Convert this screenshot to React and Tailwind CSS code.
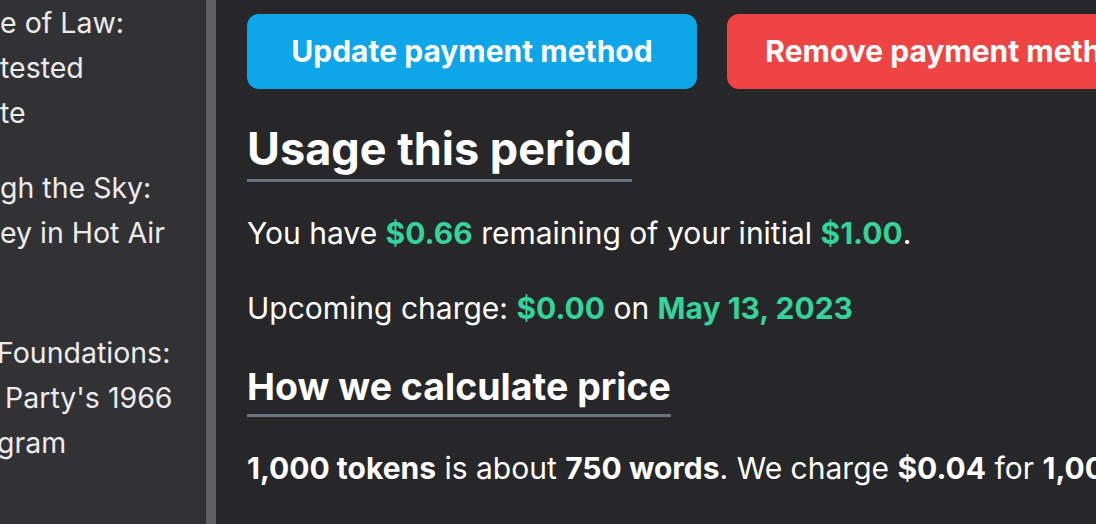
export default function App() {
  const groups = [
    ["e of Law:", "tested", "te"],
    ["gh the Sky:", "ey in Hot Air", ""],
    ["Foundations:", " Party's 1966", "gram"],
    ["", "", ""],
  ];
  return (
    <div
      className="flex h-[524px] w-[1096px] overflow-hidden bg-[#27272a]"
      style={{ fontFamily: "Inter, 'Noto Sans', sans-serif" }}
    >
      <aside className="w-[206px] shrink-0 overflow-hidden bg-[#323235] text-[28.5px] leading-[45px] text-[#ececee]">
        <div className="flex flex-col gap-[30px] whitespace-pre">
          {groups.map((g, i) => (
            <div key={i} className={i === 2 ? "-ml-[3px]" : ""}>
              {g.map((l, j) => (
                <div key={j} className="h-[45px]">{l}</div>
              ))}
            </div>
          ))}
        </div>
      </aside>
      <div className="w-[10px] shrink-0 bg-[#5f5f63]" />
      <main className="flex-1 overflow-hidden pl-[31px] pt-[14px] text-white">
        <div className="flex w-[930px] gap-[30px]">
          <button className="flex h-[75px] flex-1 items-center justify-center rounded-[12px] bg-[#0ea5e9] text-[30px] font-bold text-white">
            Update payment method
          </button>
          <button className="flex h-[75px] flex-1 items-center justify-center whitespace-nowrap rounded-[12px] bg-[#ef4444] text-[30px] font-bold text-white">
            Remove payment method
          </button>
        </div>
        <h2 className="mt-[33px] inline-block border-b-[3px] border-[#6b7280] pb-[3px] text-[45px] font-bold leading-[54px]">
          Usage this period
        </h2>
        <p className="mt-[29px] whitespace-nowrap text-[30px] leading-[45px]">
          You have <span className="font-bold text-[#34d399]">$0.66</span> remaining of your initial{" "}
          <span className="font-bold text-[#34d399]">$1.00</span>.
        </p>
        <p className="mt-[30px] whitespace-nowrap text-[30px] leading-[45px]">
          Upcoming charge: <span className="font-bold text-[#34d399]">$0.00</span> on{" "}
          <span className="font-bold text-[#34d399]">May 13, 2023</span>
        </p>
        <div>
          <h3 className="mt-[34px] inline-block border-b-[3px] border-[#6b7280] pb-[5px] text-[37.5px] font-bold leading-[44px]">
            How we calculate price
          </h3>
        </div>
        <p className="mt-[29px] whitespace-nowrap text-[30px] leading-[45px]">
          <span className="font-bold">1,000 tokens</span> is about <span className="font-bold">750 words</span>. We charge{" "}
          <span className="font-bold">$0.04</span> for <span className="font-bold">1,000 tokens</span>.
        </p>
      </main>
    </div>
  );
}
